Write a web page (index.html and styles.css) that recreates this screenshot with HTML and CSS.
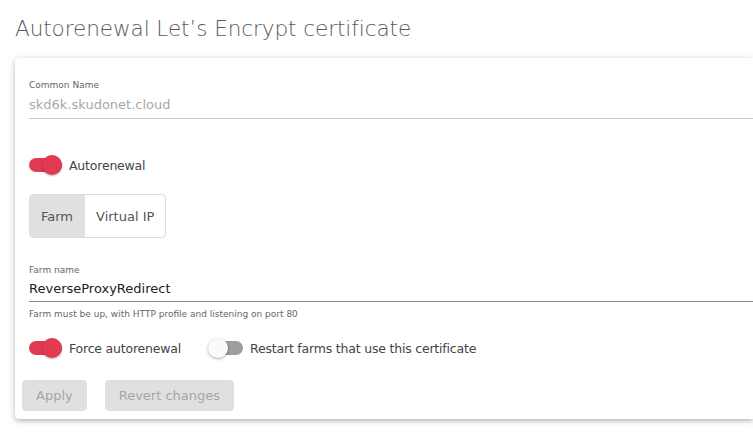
FILE: index.html
```html
<!DOCTYPE html>
<html>
<head>
<meta charset="utf-8">
<link rel="stylesheet" href="styles.css">
</head>
<body>
<div class="page">
  <h1 class="title">Autorenewal Let’s Encrypt certificate</h1>
  <div class="card">
    <div class="content">
      <div class="field">
        <div class="label">Common Name</div>
        <div class="value disabled">skd6k.skudonet.cloud</div>
      </div>
      <div class="switch-row first">
        <span class="switch on"><span class="track"></span><span class="thumb"></span></span>
        <span class="switch-label">Autorenewal</span>
      </div>
      <div class="toggle-group">
        <span class="toggle selected">Farm</span>
        <span class="toggle">Virtual IP</span>
      </div>
      <div class="field farm">
        <div class="label">Farm name</div>
        <div class="value dark">ReverseProxyRedirect</div>
        <div class="helper">Farm must be up, with HTTP profile and listening on port 80</div>
      </div>
      <div class="switch-row second">
        <span class="switch on"><span class="track"></span><span class="thumb"></span></span>
        <span class="switch-label">Force autorenewal</span>
        <span class="switch off"><span class="track"></span><span class="thumb"></span></span>
        <span class="switch-label">Restart farms that use this certificate</span>
      </div>
    </div>
    <div class="actions">
      <button class="btn apply">Apply</button>
      <button class="btn revert">Revert changes</button>
    </div>
  </div>
</div>
</body>
</html>
```

FILE: styles.css
```css
html, body {
  margin: 0;
  padding: 0;
  background: #fff;
  overflow: hidden;
}
body {
  width: 753px;
  height: 436px;
  font-family: "DejaVu Sans", sans-serif;
  color: #333;
}
.page {
  padding: 14px 0 0 15px;
}
.title {
  margin: 0;
  font-weight: 300;
  font-size: 21.6px;
  line-height: 30px;
  color: #5a5a5a;
  letter-spacing: -0.1px;
}
.card {
  margin-top: 14px;
  width: 738px;
  height: 361px;
  background: #fff;
  border-radius: 4px 0 0 4px;
  box-shadow: 0 2px 4px rgba(0,0,0,0.2), 0 1px 10px rgba(0,0,0,0.12);
  box-sizing: border-box;
  padding-top: 20px;
  display: flex;
  flex-direction: column;
}
.content {
  padding: 0 0 0 14px;
}
.field {
  border-bottom: 1px solid #c8c8c8;
}
.label {
  font-size: 9px;
  line-height: 14px;
  color: #666;
}
.value {
  font-size: 13px;
  line-height: 22px;
  padding-top: 2px;
  padding-bottom: 2px;
}
.value.disabled { color: #a8a8a8; }
.value.dark { color: #222; }
.field.farm {
  margin-top: 25px;
  border-bottom: none;
}
.field.farm .value {
  border-bottom: 1px solid #8a8a8a;
  padding-top: 1px;
  padding-bottom: 1px;
}
.helper {
  font-size: 9px;
  line-height: 13px;
  color: #666;
  margin-top: 6px;
}
.switch-row {
  display: flex;
  align-items: center;
  height: 24px;
}
.switch-row.first { margin-top: 34px; }
.switch-row.second { margin-top: 15px; }
.switch {
  position: relative;
  width: 34px;
  height: 22px;
  display: inline-block;
  margin-right: 6px;
}
.switch .track {
  position: absolute;
  left: 0;
  top: 4px;
  width: 33px;
  height: 14px;
  border-radius: 7px;
  background: #e23a52;
}
.switch .thumb {
  position: absolute;
  top: 1px;
  left: 13px;
  width: 20px;
  height: 20px;
  border-radius: 50%;
  background: #e23a52;
  box-shadow: 0 1px 2px rgba(0,0,0,0.3);
}
.switch.off { margin-left: 29px; }
.switch.off .track { background: #9e9e9e; left: 2px; width: 31px; }
.switch.off .thumb { left: -2px; background: #fafafa; box-shadow: 0 1px 3px rgba(0,0,0,0.35); }
.switch-label {
  font-size: 12.5px;
  letter-spacing: -0.2px;
  color: #444;
}
.toggle-group {
  margin-top: 17px;
  display: inline-flex;
  border: 1px solid #dcdcdc;
  border-radius: 4px;
  height: 42px;
  overflow: hidden;
}
.toggle {
  display: flex;
  align-items: center;
  padding: 0 11px;
  font-size: 13px;
  color: #555;
}
.toggle.selected {
  background: #e0e0e0;
  border-right: 1px solid #e0e0e0;
}
.actions {
  display: flex;
  gap: 18px;
  padding: 20px 0 0 7px;
}
.btn {
  border: none;
  border-radius: 4px;
  background: #e0e0e0;
  color: #a6a6a6;
  font-family: inherit;
  font-size: 13px;
  height: 31px;
  padding: 0 14px;
}
```
